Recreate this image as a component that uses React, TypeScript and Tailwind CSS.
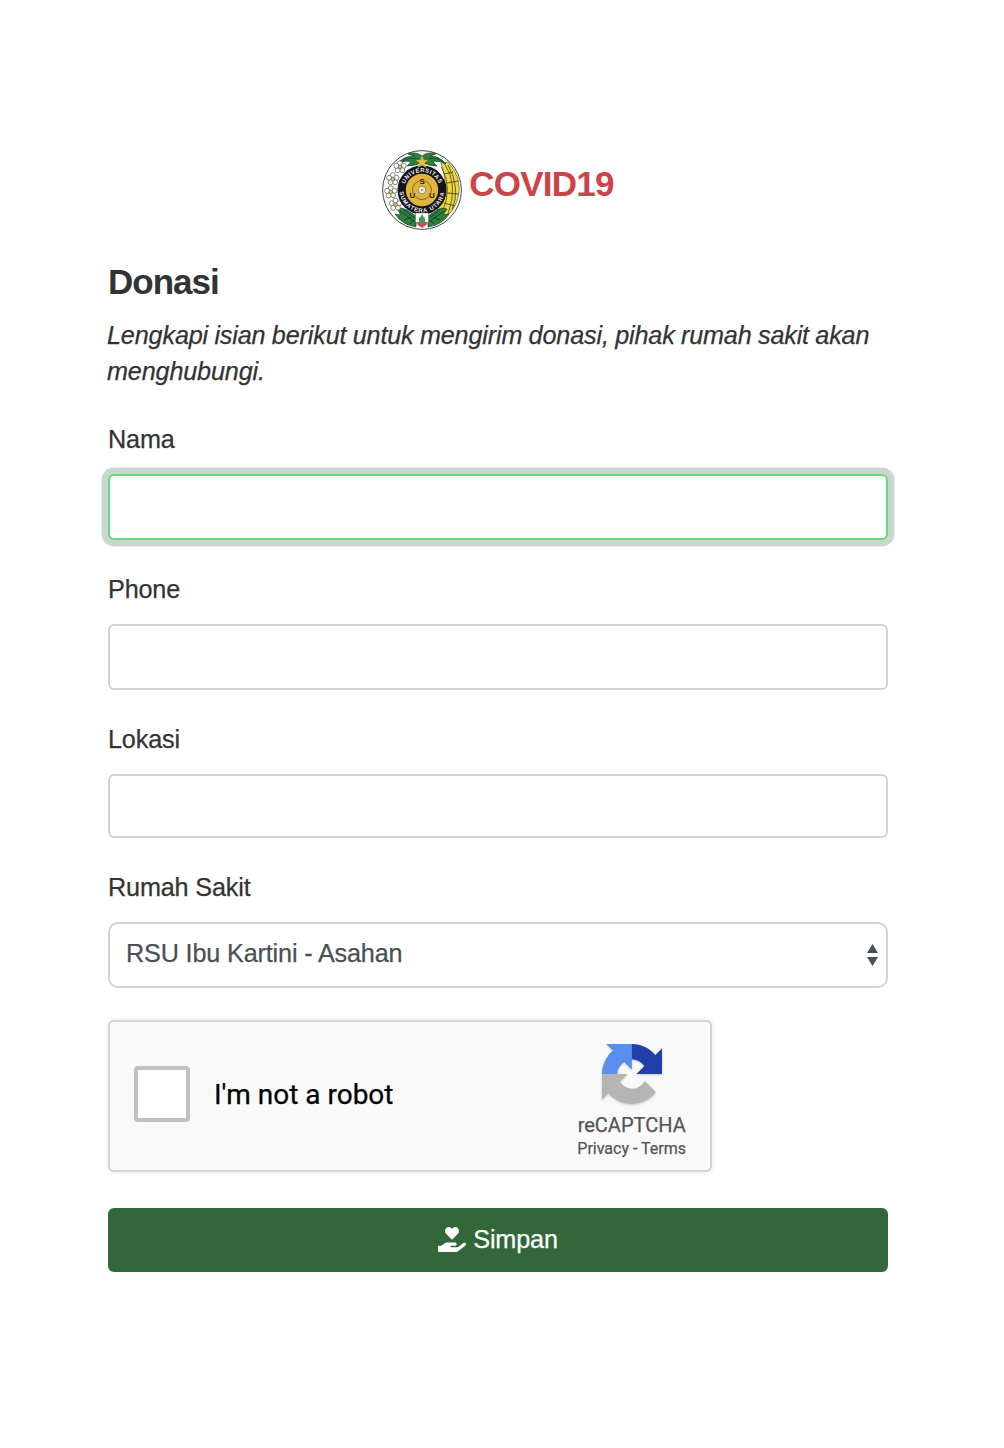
import React, { useState } from 'react';
import { FaHandHoldingHeart } from 'react-icons/fa';

const flowers = [
  [18, 17],
  [10.8, 29],
  [8.8, 42],
  [13.5, 54.5],
];

const Emblem = () => (
  <svg viewBox="0 0 80 80" className="h-20 w-20 shrink-0">
    <defs>
      <path id="ringTop" d="M22 40 A18 18 0 0 1 58 40" />
      <path id="ringBottom" d="M17.6 40 A22.4 22.4 0 0 0 62.4 40" />
    </defs>
    <circle cx="40" cy="40" r="39.4" fill="#fff" stroke="#444" strokeWidth="1" />
    {/* bananas */}
    <path d="M59 13 L66 12 Q81 28 76 48 Q72 61 63 68 L55 60 Q69 40 59 13Z" fill="#ecd93f" stroke="#4b4520" strokeWidth=".6" />
    <path d="M62 13 Q77 34 66 64 M59.5 17 Q71 38 60 63 M66 15 Q79 38 70 60" fill="none" stroke="#5c5425" strokeWidth=".9" />
    <path d="M62 24 L71 22 M65 33 L76 31 M65 43 L77 44 M62 53 L73 56" fill="none" stroke="#4b4520" strokeWidth=".9" />
    {/* leaves */}
    <path d="M40 6 Q34 1 26 4 L32 6 Q22 6 16 13 Q25 10 29 12 L25 16 Q34 16 40 12 Q46 16 55 16 L51 12 Q56 10 64 14 Q58 6 48 6 L54 4 Q46 1 40 6Z" fill="#2b8040" stroke="#1b3a22" strokeWidth=".7" />
    <path d="M38 10 Q28 6 20 11 M42 10 Q52 6 60 11" fill="none" stroke="#163a20" strokeWidth=".7" />
    <path d="M15 59 Q20 57 25 60 L34 66 V77 Q20 75 13 64 L19 65Z M65 59 Q60 57 55 60 L46 66 V77 Q60 75 67 64 L61 65Z" fill="#2b8040" stroke="#1b3a22" strokeWidth=".7" />
    <path d="M18 61 L33 72 M22 60 L34 69 M22 70 L29 67 M28 74 L32 70 M62 61 L47 72 M58 60 L46 69 M58 70 L51 67 M52 74 L48 70" stroke="#123a1c" strokeWidth=".8" />
    {flowers.map(([x, y]) => (
      <g key={y} transform={`translate(${x} ${y})`} fill="#fff" stroke="#555" strokeWidth=".7">
        <circle cy="-3.8" r="2.5" />
        <circle cx="3.7" cy="-1.2" r="2.5" />
        <circle cx="2.3" cy="3.2" r="2.5" />
        <circle cx="-2.3" cy="3.2" r="2.5" />
        <circle cx="-3.7" cy="-1.2" r="2.5" />
        <circle r="1.9" fill="#e8c93a" />
      </g>
    ))}
    <circle cx="40" cy="40" r="24.5" fill="#15131c" />
    <circle cx="40" cy="40" r="16.2" fill="#dfb53c" />
    <circle cx="40" cy="40" r="9.5" fill="none" stroke="#6b5520" strokeWidth=".8" />
    <circle cx="40" cy="40" r="3.8" fill="#eee" stroke="#777" strokeWidth=".8" />
    <circle cx="40" cy="40" r="1.3" fill="#cba335" />
    <g fill="#eee" fontFamily="Liberation Sans, sans-serif" fontWeight="700" fontSize="5.8">
      <text textAnchor="middle" letterSpacing=".5"><textPath href="#ringTop" startOffset="50%">UNIVERSITAS</textPath></text>
      <text textAnchor="middle" letterSpacing=".9"><textPath href="#ringBottom" startOffset="50%">SUMATERA UTARA</textPath></text>
    </g>
    <g fill="#2a2110" stroke="#dfb53c" strokeWidth="1.2" paintOrder="stroke" fontFamily="Liberation Sans, sans-serif" fontWeight="700" fontSize="8" textAnchor="middle">
      <text x="40" y="34">S</text>
      <text x="30.3" y="47.5">U</text>
      <text x="49.7" y="47.5">U</text>
    </g>
    <path d="M40 4.5 L41.7 9.8 H46.5 L42.7 13 L44.2 18 L40 15 L35.8 18 L37.3 13 L33.5 9.8 H38.3Z" fill="#e5b93a" stroke="#8a6a1c" strokeWidth=".3" />
    <path d="M33.5 63 H46.5 V72 Q44 76 40 78 Q36 76 33.5 72Z" fill="#fff" stroke="#666" strokeWidth=".5" />
    <path d="M34 72 H46 Q44 76 40 77.6 Q36 76 34 72Z" fill="#cf4450" />
    <path d="M40 64 L41.5 67 L43 68 V73.5 H37 V68 L38.5 67Z" fill="#3a9b62" />
  </svg>
);

const RecaptchaLogo = () => (
  <svg viewBox="0 0 64 64" className="h-[60px] w-[60px] drop-shadow-[0_1px_1px_rgba(0,0,0,0.2)]">
    <path fill="#213fa8" d="M64 31.955l-.033-1.37V4.687l-7.16 7.16C50.948 4.674 42.033.093 32.05.093c-10.4 0-19.622 4.96-25.458 12.64l11.736 11.86a15.55 15.55 0 0 1 4.754-5.334c2.05-1.6 4.952-2.906 8.968-2.906.485 0 .86.057 1.135.163 4.976.393 9.288 3.14 11.828 7.124l-8.307 8.307L64 31.953" />
    <path fill="#5990ef" d="M31.862.094l-1.37.033H4.594l7.16 7.16C4.58 13.147 0 22.06 0 32.046c0 10.4 4.96 19.622 12.64 25.458L24.5 45.768a15.55 15.55 0 0 1-5.334-4.754c-1.6-2.05-2.906-4.952-2.906-8.968 0-.485.057-.86.163-1.135.393-4.976 3.14-9.288 7.124-11.828l8.307 8.307L31.86.095" />
    <path fill="#b5b5b5" d="M.001 32.045l.033 1.37v25.898l7.16-7.16c5.86 7.173 14.774 11.754 24.76 11.754 10.4 0 19.622-4.96 25.458-12.64l-11.736-11.86a15.55 15.55 0 0 1-4.754 5.334c-2.05 1.6-4.952 2.906-8.968 2.906-.485 0-.86-.057-1.135-.163-4.976-.393-9.288-3.14-11.828-7.124l8.307-8.307c-10.522.04-22.4.066-27.295-.005" />
  </svg>
);

interface FieldProps {
  label: string;
  value: string;
  onChange: (value: string) => void;
  className: string;
}

const Field: React.FC<FieldProps> = ({ label, value, onChange, className }) => (
  <label className="mb-[31px] block">
    <span className="mb-[17px] block">{label}</span>
    <input
      type="text"
      value={value}
      onChange={(e) => onChange(e.target.value)}
      className={`block w-full rounded-md border-2 bg-white px-4 outline-none ${className}`}
    />
  </label>
);

export default function App() {
  const [name, setName] = useState('');
  const [phone, setPhone] = useState('');
  const [location, setLocation] = useState('');

  return (
    <div className="min-h-screen bg-white pt-[150px] pr-[116px] pl-[108px] font-['Liberation_Sans',sans-serif] text-[25.2px] leading-9 tracking-[-0.15px] text-[#333] [-webkit-text-stroke:0.25px]">
      <div className="flex justify-center gap-[7px]">
        <Emblem />
        <h1 className="mt-3.5 text-[35px] leading-10 font-bold tracking-[-0.75px] text-[#cb444a] [-webkit-text-stroke:0]">COVID19</h1>
      </div>

      <form onSubmit={(e) => e.preventDefault()}>
        <h2 className="mt-8 mb-[15px] text-[35px] leading-10 font-bold tracking-[-1px] [-webkit-text-stroke:0]">Donasi</h2>
        <p className="mb-8 -ml-px italic [word-spacing:-0.5px]">
          Lengkapi isian berikut untuk mengirim donasi, pihak rumah sakit akan menghubungi.
        </p>

        <Field label="Nama" value={name} onChange={setName} className="h-[66px] border-[#66d97e] shadow-[0_0_0_6.4px_#c9d6cd]" />
        <Field label="Phone" value={phone} onChange={setPhone} className="h-[66px] border-[#ced4da]" />
        <Field label="Lokasi" value={location} onChange={setLocation} className="h-16 border-[#ced4da]" />

        <div className="mb-8">
          <span className="mb-[17px] block">Rumah Sakit</span>
          <button type="button" className="flex h-[66px] w-full items-center justify-between rounded-[10px] border-2 border-[#ced4da] pr-2 pl-4 text-[#495057]">
            <span className="-mt-1">RSU Ibu Kartini - Asahan</span>
            <svg viewBox="0 0 11 22" className="h-[22px] w-[11px]" fill="#495057">
              <path d="M5.5 0 L11 9 H0Z M0 13 H11 L5.5 22Z" />
            </svg>
          </button>
        </div>

        <div className="mb-9 flex h-[152px] w-[604px] items-center rounded-md border-2 border-[#d3d3d3] bg-[#f9f9f9] pr-6 pl-6 font-[Roboto,sans-serif] tracking-normal shadow-[0_0_4px_1px_rgba(0,0,0,0.08)]">
          <span className="mt-[-4px] h-14 w-14 rounded-sm border-4 border-[#c1c1c1] bg-white" />
          <span className="-mt-0.5 ml-6 text-[28px] text-black">I'm not a robot</span>
          <div className="mt-[13px] ml-auto flex flex-col items-center text-[#555]">
            <RecaptchaLogo />
            <span className="mt-[9px] text-[20px] leading-6">reCAPTCHA</span>
            <span className="text-[16px] leading-6">Privacy - Terms</span>
          </div>
        </div>

        <button type="submit" className="flex h-16 w-full items-center justify-center gap-[7px] rounded-md bg-[#32673a] pb-0.5 text-white">
          <FaHandHoldingHeart className="h-[25px] w-7" />
          Simpan
        </button>
      </form>
    </div>
  );
}
